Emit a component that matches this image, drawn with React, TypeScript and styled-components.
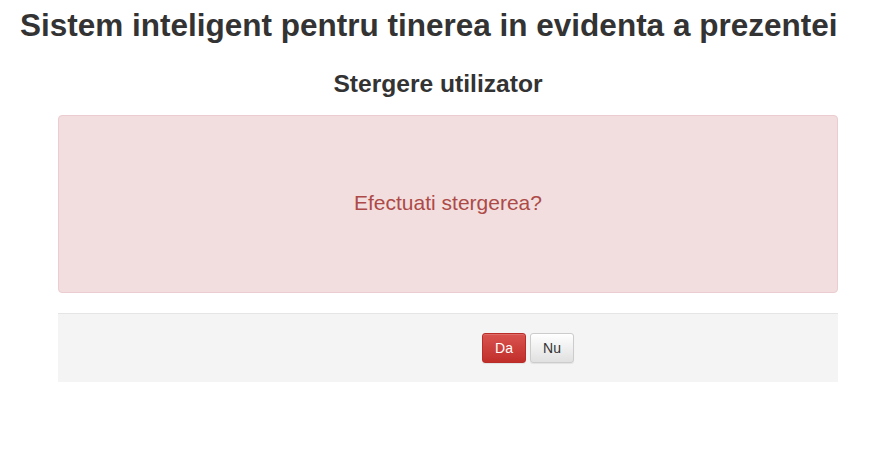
import React from 'react'
import styled, { createGlobalStyle } from 'styled-components'

const GlobalStyle = createGlobalStyle`
  body {
    margin: 0;
    background: #fff;
    font-family: "Liberation Sans", Arial, sans-serif;
    font-size: 14px;
    color: #333;
  }
`

const Page = styled.div`
  width: 887px;
  display: flex;
  flex-direction: column;
`

const Title = styled.h1`
  margin: 7px 0 0 20px;
  font-size: 31.5px;
  font-weight: bold;
  line-height: 36px;
  color: #333;
`

const Subtitle = styled.h2`
  margin: 26px 0 0 0;
  padding-right: 11px;
  text-align: center;
  font-size: 24.6px;
  font-weight: bold;
  line-height: 30px;
  color: #333;
`

const Content = styled.div`
  width: 780px;
  margin: 16px 0 0 58px;
  display: flex;
  flex-direction: column;
`

const Alert = styled.div`
  height: 174px;
  display: flex;
  align-items: center;
  justify-content: center;
  background: #f2dede;
  border: 1px solid #ebccd1;
  border-radius: 4px;
  color: #ad4a48;
  font-size: 21px;
  padding-bottom: 2px;
  box-sizing: content-box;
`

const Footer = styled.div`
  margin-top: 20px;
  height: 68px;
  display: flex;
  align-items: center;
  gap: 4px;
  padding-left: 424px;
  background: #f4f4f4;
  border-top: 1px solid #e5e5e5;
`

const Button = styled.button<{ $variant: 'danger' | 'default' }>`
  width: 44px;
  height: 30px;
  padding: 0;
  font-family: inherit;
  font-size: 14px;
  border-radius: 3px;
  cursor: pointer;
  ${({ $variant }) =>
    $variant === 'danger'
      ? `
    color: #fff;
    background: linear-gradient(to bottom, #d9534f 0%, #c12e2a 100%);
    border: 1px solid #b92c28;
    box-shadow: inset 0 1px 0 rgba(255,255,255,.15), 0 1px 1px rgba(0,0,0,.075);
  `
      : `
    color: #333;
    background: linear-gradient(to bottom, #fff 0%, #e0e0e0 100%);
    border: 1px solid #ccc;
    box-shadow: inset 0 1px 0 rgba(255,255,255,.15), 0 1px 1px rgba(0,0,0,.075);
  `}
`

const App = () => {
  return (
    <Page>
      <GlobalStyle />
      <Title>Sistem inteligent pentru tinerea in evidenta a prezentei</Title>
      <Subtitle>Stergere utilizator</Subtitle>
      <Content>
        <Alert>Efectuati stergerea?</Alert>
        <Footer>
          <Button $variant='danger'>Da</Button>
          <Button $variant='default'>Nu</Button>
        </Footer>
      </Content>
    </Page>
  )
}

export default App
